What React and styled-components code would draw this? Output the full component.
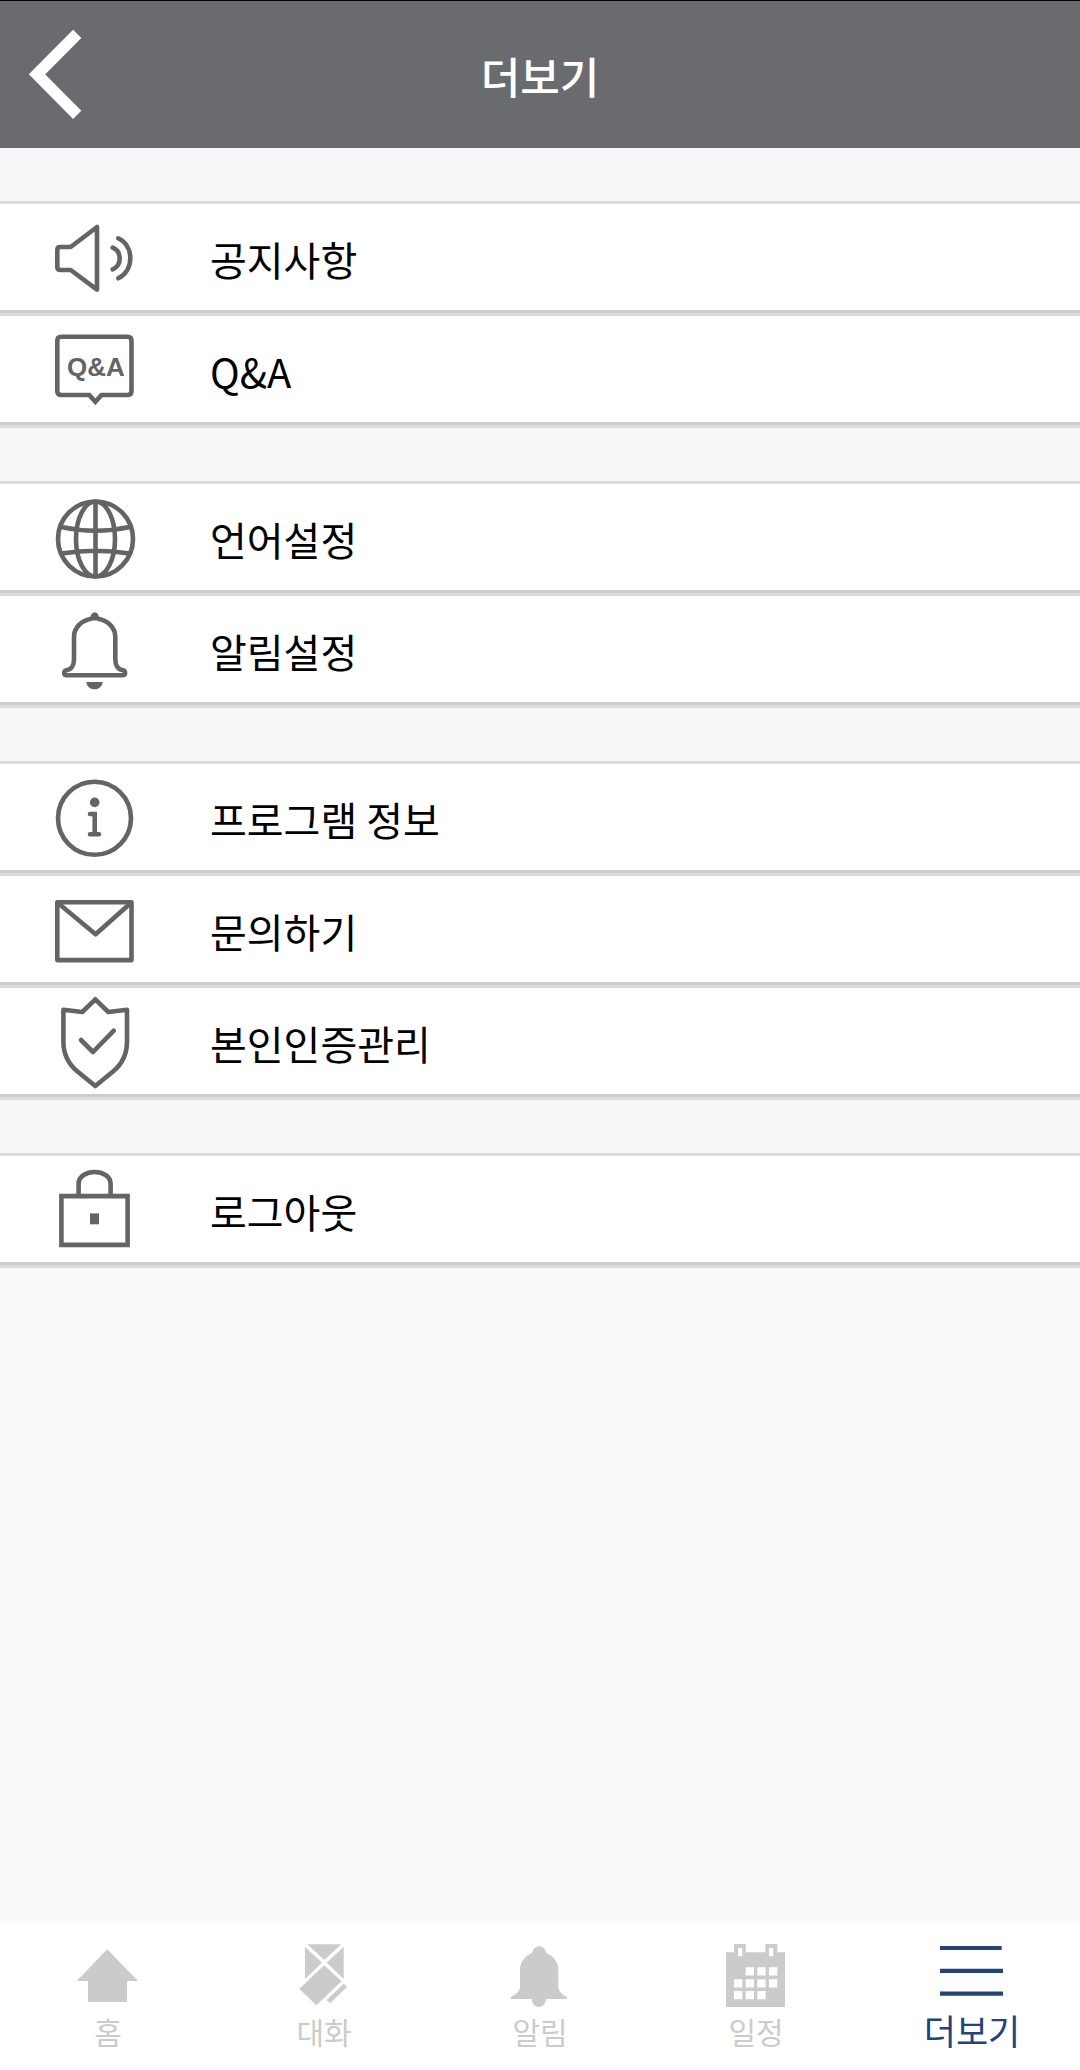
import styled, { createGlobalStyle } from "styled-components";

const GlobalStyle = createGlobalStyle`
    * {
        box-sizing: border-box;
    }
    body {
        margin: 0;
        background-color: #fafafa;
        font-family: "Noto Sans CJK KR", "Noto Sans", sans-serif;
    }
`

const Container = styled.div`
    min-height: 100vh;
    display: flex;
    flex-direction: column;
`

const Header = styled.header`
    height: 148px;
    border-top: 1px solid #000;
    background-color: #6a6b6f;
    display: grid;
    grid-template-columns: 1fr auto 1fr;
    align-items: center;
`
const BackButton = styled.button`
    width: 112px;
    height: 147px;
    padding: 0;
    border: none;
    background: none;
    cursor: pointer;
`
const Title = styled.h1`
    margin: 0;
    color: white;
    font-size: 43px;
    font-weight: 500;
    line-height: 60px;
`

const Main = styled.main`
    flex: 1;
`
const Section = styled.section`
    padding-top: 53px;
    background-color: #f7f8fa;
`
const List = styled.ul`
    margin: 0;
    padding: 0;
    list-style: none;
    border-top: 3px solid #dcdcdc;
`
const ListItem = styled.li`
    border-bottom: 3px solid #dcdcdc;
`
const RowLink = styled.a`
    height: 109px;
    padding-left: 55px;
    border-bottom: 3px solid #cbcbcb;
    background-color: white;
    color: black;
    font-size: 40px;
    line-height: 60px;
    text-decoration: none;
    display: flex;
    align-items: center;
    gap: 71px;
`
const RowLabel = styled.span`
    padding-top: 3px;
`
const RowIcon = styled.svg`
    width: 84px;
    height: 106px;
    flex-shrink: 0;
    fill: none;
    stroke: #646464;
    stroke-width: 4.6;
`
const IconText = styled.text`
    font-family: "Liberation Sans", Arial, sans-serif;
    font-size: 26px;
    font-weight: 700;
    fill: #646464;
    stroke: none;
`

const Nav = styled.nav`
    height: 147px;
    background-color: white;
    display: flex;
`
const Tab = styled.a`
    flex: 1;
    display: flex;
    flex-direction: column;
    align-items: center;
    color: ${props => props.$active ? "#22437c" : "#cbcbcb"};
    font-size: ${props => props.$active ? "35px" : "30px"};
    line-height: ${props => props.$active ? "38px" : "40px"};
    text-decoration: none;
`
const TabIcon = styled.svg`
    width: 64px;
    height: 88px;
    fill: currentColor;
`

const icons = {
  notice: (
    <g strokeLinejoin="round" strokeLinecap="round">
      <path d="M15.7 43 L42 23 V85.6 L15.7 66 H5.3 Q2.3 66 2.3 63 V46 Q2.3 43 5.3 43 Z" />
      <path d="M57.7 43.7 C67 47.5 67 61.5 57.7 65.3" />
      <path d="M63.3 34.3 C79.3 42 79.3 66.6 63.3 74.3" />
    </g>
  ),
  qna: (
    <>
      <path d="M6.3 20.7 H72.5 Q76.5 20.7 76.5 24.7 V75 Q76.5 79 72.5 79 H46.5 L40.4 85.8 L34.3 79 H6.3 Q2.3 79 2.3 75 V24.7 Q2.3 20.7 6.3 20.7 Z" />
      <IconText x="12" y="60">Q&amp;A</IconText>
    </>
  ),
  language: (
    <>
      <circle cx="40.5" cy="55" r="37.5" />
      <ellipse cx="40.5" cy="55" rx="19.5" ry="37.5" />
      <path d="M40.5 17 V93 M6.5 43 Q40.5 50.5 74.5 43 M6.5 69.5 Q40.5 64 74.5 69.5" />
    </>
  ),
  alarm: (
    <>
      <path
        strokeLinejoin="round"
        d="M36.5 22.8 C26 24.5 19 32 19 41 V63 C19 69 16.5 73.5 12 74 C8.3 74.8 8.3 79.3 12 79.3 H67.3 C71 79.3 71 74.8 67.3 74 C62.8 73.5 60.3 69 60.3 63 V41 C60.3 32 53.3 24.5 42.8 22.8"
      />
      <path d="M35 24.5 C35 13.5 44.4 13.5 44.4 24.5 Z" fill="#646464" stroke="none" />
      <path d="M31.3 86 H47.7 C46.5 95.8 32.5 95.8 31.3 86 Z" fill="#646464" stroke="none" />
    </>
  ),
  info: (
    <>
      <circle cx="39.5" cy="54.3" r="36.5" />
      <circle cx="39.7" cy="38.4" r="4.8" fill="#646464" stroke="none" />
      <path strokeLinecap="round" d="M35 50 H39.7 V70.3 M35 70.3 H44" />
    </>
  ),
  mail: (
    <g strokeLinejoin="round">
      <path d="M2.3 26.2 H76.5 V84.1 H2.3 Z" />
      <path d="M3.3 27.2 L40.6 58.3 L75.5 27.2" />
    </g>
  ),
  shield: (
    <g strokeLinejoin="round" strokeLinecap="round">
      <path d="M8.4 21.7 L27.3 24 L40.3 11.3 L53.3 24 L72 21.7 V53.7 C72 66 66.5 76.5 58 83.5 L40.3 98 L22.5 83.5 C14 76.5 8.4 66 8.4 53.7 Z" />
      <path d="M26 52 L38 64 L58.8 42.7" />
    </g>
  ),
  lock: (
    <>
      <path d="M6.4 40.1 H72.6 V88.9 H6.4 Z" />
      <path d="M23.6 40 V28 C23.6 12 55.6 12 55.6 28 V40" />
      <path d="M35 57.4 H44 V68.3 H35 Z" fill="#646464" stroke="none" />
    </>
  ),
};

const sections = [
  [
    { icon: "notice", label: "공지사항" },
    { icon: "qna", label: "Q&A" },
  ],
  [
    { icon: "language", label: "언어설정" },
    { icon: "alarm", label: "알림설정" },
  ],
  [
    { icon: "info", label: "프로그램 정보" },
    { icon: "mail", label: "문의하기" },
    { icon: "shield", label: "본인인증관리" },
  ],
  [{ icon: "lock", label: "로그아웃" }],
];

const tabs = [
  { label: "홈", icon: <path d="M31.3 26.3 L62 58 H51 V79 H12 V58 H0.7 Z" /> },
  {
    label: "대화",
    icon: (
      <path d="M15.3 21.3 H49.3 L32.3 37 Z M13 23.7 L30 39.7 L13 56 Z M51.7 23.7 V56 L34.7 39.7 Z M32.3 42.3 L49.7 58.3 L24.3 82.3 L7.3 65.7 Z M51.7 60.7 L55 64 L38 80.3 L34.7 77 Z" />
    ),
  },
  {
    label: "알림",
    icon: (
      <path d="M24 30 A7.3 8 0 0 1 38.4 30 C45.5 33 50.3 39 50.3 47 V65.3 C51.5 69 54.5 72.3 58.7 73.7 V76 H38 A7.1 8 0 0 1 23.8 76 H3 V73.7 C7.3 72 10.8 69 12 65.3 V47 C12 39 17 33 24 30 Z" />
    ),
  },
  {
    label: "일정",
    icon: (
      <path
        fillRule="evenodd"
        d="M2 29.3 H10 V21 H21.7 V29.3 H41.3 V21 H53.3 V29.3 H61 V84 H2 Z
          M14 25 V33.3 H18.3 V25 Z M45 25 V33.3 H49.3 V25 Z
          M21.7 44.3 h8.3 v8.3 h-8.3 Z M33.3 44.3 h8.3 v8.3 h-8.3 Z M45 44.3 h8.3 v8.3 h-8.3 Z
          M10 56.3 h8.3 v8.3 h-8.3 Z M21.7 56.3 h8.3 v8.3 h-8.3 Z M33.3 56.3 h8.3 v8.3 h-8.3 Z M45 56.3 h8.3 v8.3 h-8.3 Z
          M10 68 h8.3 v8.3 h-8.3 Z M21.7 68 h8.3 v8.3 h-8.3 Z M33.3 68 h8.3 v8.3 h-8.3 Z"
      />
    ),
  },
  {
    label: "더보기",
    active: true,
    icon: <path d="M0 23 H61.7 V27 H0 Z M0 45.8 H63 V50 H0 Z M0 68.5 H63 V72.7 H0 Z" />,
  },
];

const App = () => {
  return (
    <Container>
      <GlobalStyle />
      <Header>
        <BackButton aria-label="뒤로">
          <svg width="112" height="147" viewBox="0 0 112 147" fill="none" stroke="white" strokeWidth="11.6">
            <path d="M77.2 32.8 L37 73.3 L77.2 113.8" />
          </svg>
        </BackButton>
        <Title>더보기</Title>
      </Header>
      <Main>
        {sections.map((rows) => (
          <Section key={rows[0].label}>
            <List>
              {rows.map((row) => (
                <ListItem key={row.label}>
                  <RowLink href="#">
                    <RowIcon viewBox="0 0 84 106" aria-hidden="true">
                      {icons[row.icon]}
                    </RowIcon>
                    <RowLabel>{row.label}</RowLabel>
                  </RowLink>
                </ListItem>
              ))}
            </List>
          </Section>
        ))}
      </Main>
      <Nav>
        {tabs.map((tab) => (
          <Tab key={tab.label} href="#" $active={tab.active}>
            <TabIcon viewBox="0 0 64 88" aria-hidden="true">
              {tab.icon}
            </TabIcon>
            {tab.label}
          </Tab>
        ))}
      </Nav>
    </Container>
  )
}

export default App
